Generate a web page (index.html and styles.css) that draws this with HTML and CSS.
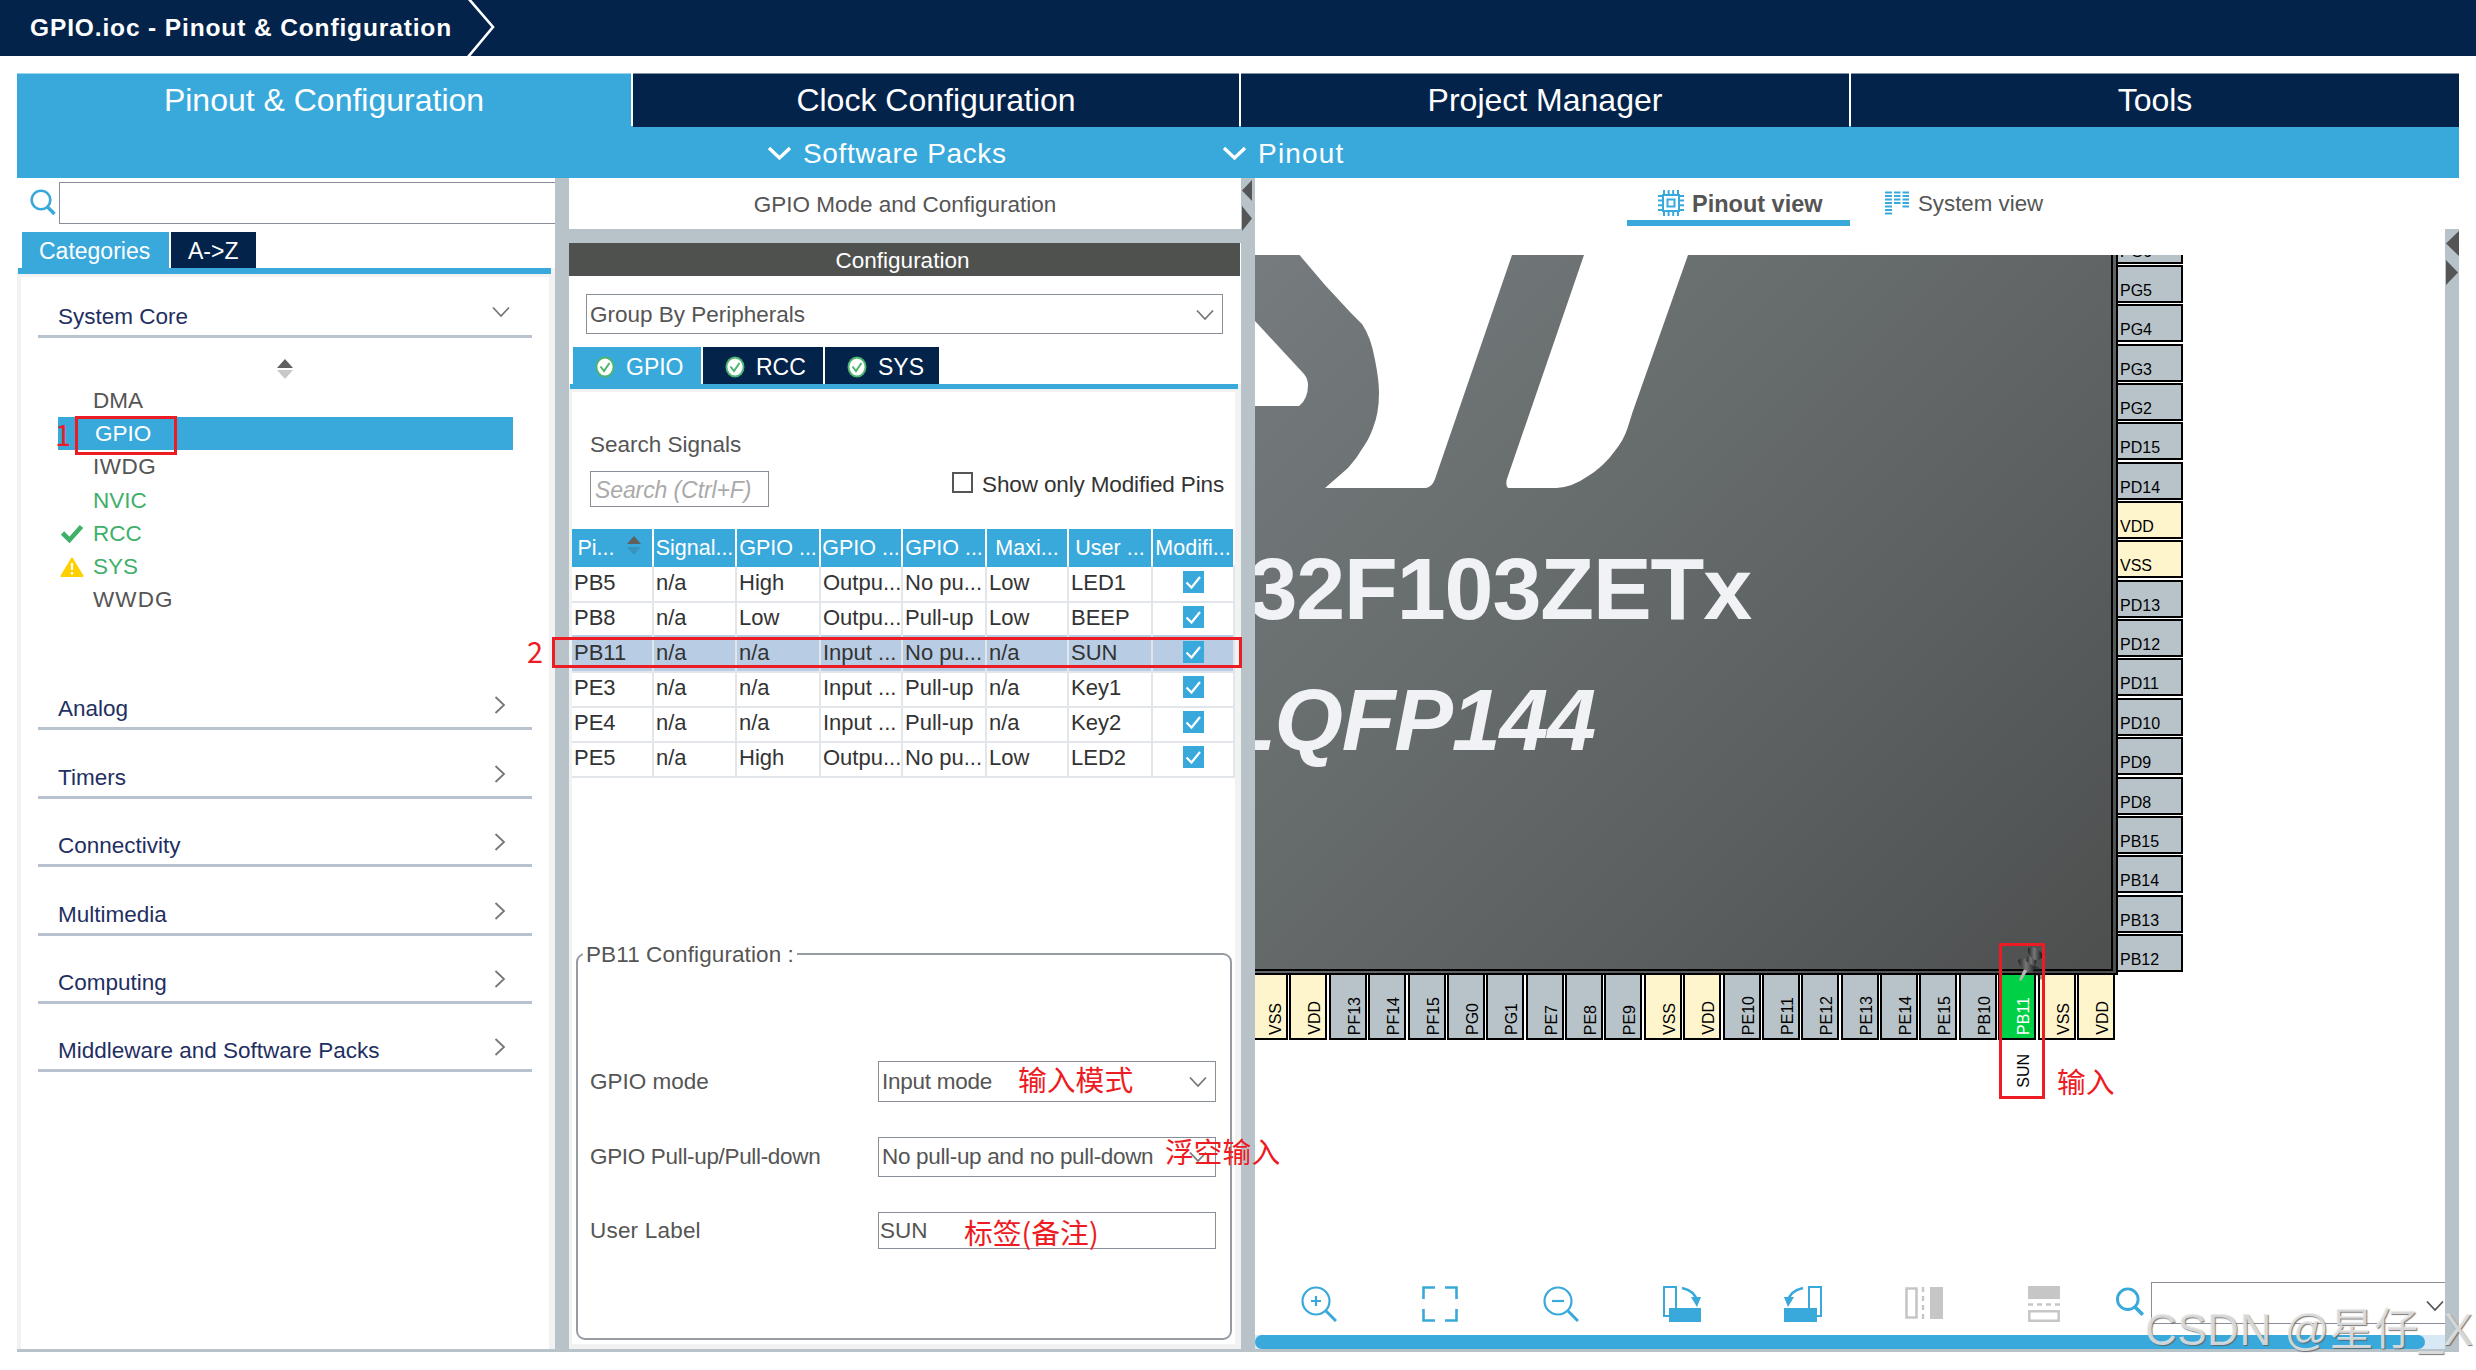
FILE: index.html
```html
<!DOCTYPE html>
<html lang="en">
<head>
<meta charset="utf-8">
<title>GPIO.ioc - Pinout &amp; Configuration</title>
<link rel="stylesheet" href="styles.css">
</head>
<body>
<svg class="defs" width="0" height="0">
  <defs>
    <symbol id="ok" viewBox="0 0 20 22"><ellipse cx="10" cy="11" rx="9.5" ry="10.5" fill="#4cb56f"/><ellipse cx="10" cy="11" rx="7.6" ry="8.6" fill="#fff"/><path d="M5.5 10.5 9 15l5.5-8" fill="none" stroke="#4cb56f" stroke-width="2"/></symbol>
    <symbol id="down" viewBox="0 0 18 12"><path d="M1 1.5 9 10l8-8.500" fill="none" stroke="currentColor" stroke-width="1.8"/></symbol>
    <symbol id="right" viewBox="0 0 12 18"><path d="M1.500 1 10 9l-8.500 8" fill="none" stroke="currentColor" stroke-width="1.800"/></symbol>
    <symbol id="search" viewBox="0 0 26 27"><circle cx="11" cy="11" r="9.300" fill="none" stroke="#39a9dc" stroke-width="2.600"/><path d="m17.500 18 7 7" stroke="#39a9dc" stroke-width="3.400"/></symbol>
    <symbol id="tick" viewBox="0 0 21 22"><path fill="#39a9dc" d="M0 0h21v22H0z"/><path d="m3.500 11.500 5 5L17 6" fill="none" stroke="#fff" stroke-width="2.200"/></symbol>
  </defs>
</svg>

<header class="titlebar">
  <span class="titlebar-text">GPIO.ioc - Pinout &amp; Configuration</span>
  <svg width="30" height="56"><path d="M1 -2 26 27 1 57" fill="none" stroke="#fff" stroke-width="2.600"/></svg>
</header>

<nav class="main-tabs">
  <div class="main-tab active">Pinout &amp; Configuration</div>
  <div class="main-tab">Clock Configuration</div>
  <div class="main-tab">Project Manager</div>
  <div class="main-tab">Tools</div>
</nav>
<div class="sub-bar">
  <div class="sub-item packs"><svg width="25" height="15"><path d="m2 2 10.500 10L23 2" fill="none" stroke="#fff" stroke-width="3.400"/></svg>Software Packs</div>
  <div class="sub-item pinout"><svg width="25" height="15"><path d="m2 2 10.500 10L23 2" fill="none" stroke="#fff" stroke-width="3.400"/></svg>Pinout</div>
</div>

<main class="workspace">
  <aside class="sidebar">
    <div class="side-search"><svg width="26" height="27"><use href="#search"/></svg><div class="side-input"></div></div>
    <div class="tabs side-tabs"><div class="tab active">Categories</div><div class="tab">A-&gt;Z</div></div>
    <div class="side-panel">
      <div class="cat first"><span>System Core</span><svg width="18" height="12"><use href="#down"/></svg></div>
      <div class="periph">
        <svg class="sort" width="16" height="20"><path d="M8 0l8 9H0z" fill="#606060"/><path d="M8 20l8-9H0z" fill="#c8c8c8"/></svg>
        <div class="item"><i></i>DMA</div>
        <div class="item selected"><i></i>GPIO</div>
        <div class="item wide"><i></i>IWDG</div>
        <div class="item green"><i></i>NVIC</div>
        <div class="item green"><i><svg width="24" height="20"><path d="m2.500 9 7 7L21.500 2.500" fill="none" stroke="#3fb06a" stroke-width="4.600"/></svg></i>RCC</div>
        <div class="item green"><i><svg width="24" height="20"><path d="M12 1.500 22.500 19h-21z" fill="#ffd000" stroke="#ffd000" stroke-width="2" stroke-linejoin="round"/><path d="M12 6v7m0 2v2.500" stroke="#fff" stroke-width="2.200"/></svg></i>SYS</div>
        <div class="item wider"><i></i>WWDG</div>
      </div>
      <div class="cat"><span>Analog</span><svg width="12" height="18"><use href="#right"/></svg></div>
      <div class="cat"><span>Timers</span><svg width="12" height="18"><use href="#right"/></svg></div>
      <div class="cat"><span>Connectivity</span><svg width="12" height="18"><use href="#right"/></svg></div>
      <div class="cat"><span>Multimedia</span><svg width="12" height="18"><use href="#right"/></svg></div>
      <div class="cat"><span>Computing</span><svg width="12" height="18"><use href="#right"/></svg></div>
      <div class="cat"><span>Middleware and Software Packs</span><svg width="12" height="18"><use href="#right"/></svg></div>
    </div>
  </aside>
  <div class="splitter"></div>

  <section class="config">
    <div class="mode-title">GPIO Mode and Configuration</div>
    <div class="gap-bar"></div>
    <div class="config-title">Configuration</div>
    <div class="field group-by">Group By Peripherals<svg width="18" height="12"><use href="#down"/></svg></div>
    <div class="tabs config-tabs">
      <div class="tab active"><svg width="20" height="22"><use href="#ok"/></svg>GPIO</div>
      <div class="tab rcc"><svg width="20" height="22"><use href="#ok"/></svg>RCC</div>
      <div class="tab sys"><svg width="20" height="22"><use href="#ok"/></svg>SYS</div>
    </div>
    <div class="config-panel">
      <div class="signals-label">Search Signals</div>
      <div class="signals-row">
        <div class="signals-input">Search (Ctrl+F)</div>
        <div class="modified"><span class="box"></span>Show only Modified Pins</div>
      </div>
      <div class="table">
        <div class="tr head"><span class="l">Pi...<svg width="14" height="19"><path d="M7 0l7 8H0z" fill="#606060"/><path d="M7 19l7-8H0z" fill="#3994bd"/></svg></span><span>Signal...</span><span>GPIO ...</span><span>GPIO ...</span><span>GPIO ...</span><span>Maxi...</span><span>User ...</span><span>Modifi...</span></div>
        <div class="tr"><span>PB5</span><span>n/a</span><span>High</span><span>Outpu...</span><span>No pu...</span><span>Low</span><span>LED1</span><span><svg width="21" height="22"><use href="#tick"/></svg></span></div>
        <div class="tr"><span>PB8</span><span>n/a</span><span>Low</span><span>Outpu...</span><span>Pull-up</span><span>Low</span><span>BEEP</span><span><svg width="21" height="22"><use href="#tick"/></svg></span></div>
        <div class="tr picked"><span>PB11</span><span>n/a</span><span>n/a</span><span>Input ...</span><span>No pu...</span><span>n/a</span><span>SUN</span><span><svg width="21" height="22"><use href="#tick"/></svg></span></div>
        <div class="tr"><span>PE3</span><span>n/a</span><span>n/a</span><span>Input ...</span><span>Pull-up</span><span>n/a</span><span>Key1</span><span><svg width="21" height="22"><use href="#tick"/></svg></span></div>
        <div class="tr"><span>PE4</span><span>n/a</span><span>n/a</span><span>Input ...</span><span>Pull-up</span><span>n/a</span><span>Key2</span><span><svg width="21" height="22"><use href="#tick"/></svg></span></div>
        <div class="tr"><span>PE5</span><span>n/a</span><span>High</span><span>Outpu...</span><span>No pu...</span><span>Low</span><span>LED2</span><span><svg width="21" height="22"><use href="#tick"/></svg></span></div>
      </div>
      <div class="pin-config">
        <div class="legend">PB11 Configuration :</div>
        <div class="form-row"><label>GPIO mode</label><div class="field mode">Input mode<svg width="18" height="12"><use href="#down"/></svg></div></div>
        <div class="form-row tight"><label>GPIO Pull-up/Pull-down</label><div class="field">No pull-up and no pull-down<svg width="18" height="12"><use href="#down"/></svg></div></div>
        <div class="form-row"><label class="user">User Label</label><div class="field label-input">SUN</div></div>
      </div>
    </div>
  </section>
  <div class="splitter second"><svg width="13" height="56"><path d="M10 2v21L0 12.500zM0 28v25l10-12.500z" fill="#555"/></svg></div>

  <section class="view">
    <div class="view-tabs">
      <div class="view-tab active">
        <svg width="26" height="26" fill="none" stroke="#39a9dc" stroke-width="2"><path d="M5 5h16v16H5zM9.500 9.500h7v7h-7zM6 0v5m4.600-5v5m4.600-5v5M20 0v5M6 21v5m4.600-5v5m4.600-5v5m4.800-5v5M0 6h5m-5 4.600h5m-5 4.600h5M0 20h5M21 6h5m-5 4.600h5m-5 4.600h5M21 20h5"/></svg>Pinout view
      </div>
      <div class="view-tab">
        <svg width="26" height="24" stroke="#39a9dc" stroke-width="2.200"><path d="M1 1.500h7m2 0h6.500m2 0H25M1 5h7m2 0h6.500m2 0H25M1 8.500h7m2 0h6.500m2 0H25M1 12h7m2 0h6.500m2 0H25M1 15.500h7m10.500 0H25M1 19h7M1 22.500h7"/></svg>System view
      </div>
    </div>
    <div class="view-body">
      <div class="view-main">
        <div class="canvas">
          <div class="die">
            <svg class="logo" width="440" height="240" viewBox="1255 255 440 240" fill="#fff">
              <path d="M1299.500 255 1325 285l25 27 12 12q9 13 13 36 4 20 4 33 0 20-6 35-4 11-9 18-7 12-16 22l-23 20h101q6-1 9-9L1512 255z"/>
              <path d="M1584 255 1506.600 480q-1 7 2 8h48q16-1 30-11 17-10 29-27 8-10 12-22l5-16L1688 255z"/>
              <path d="M1255 321 1304 374q4 5 4 11 0 14-9 21h-44z"/>
            </svg>
            <div class="part">STM32F103ZETx</div>
            <div class="package">LQFP144</div>
          </div>
          <div class="pins-right">
            <div class="pin">PG6</div><div class="pin">PG5</div><div class="pin">PG4</div><div class="pin">PG3</div><div class="pin">PG2</div><div class="pin">PD15</div><div class="pin">PD14</div><div class="pin power">VDD</div><div class="pin power">VSS</div><div class="pin">PD13</div><div class="pin">PD12</div><div class="pin">PD11</div><div class="pin">PD10</div><div class="pin">PD9</div><div class="pin">PD8</div><div class="pin">PB15</div><div class="pin">PB14</div><div class="pin">PB13</div><div class="pin">PB12</div>
          </div>
          <div class="pins-bottom">
            <div class="pin power"><b>VSS</b></div><div class="pin power"><b>VDD</b></div><div class="pin"><b>PF13</b></div><div class="pin"><b>PF14</b></div><div class="pin"><b>PF15</b></div><div class="pin"><b>PG0</b></div><div class="pin"><b>PG1</b></div><div class="pin"><b>PE7</b></div><div class="pin"><b>PE8</b></div><div class="pin"><b>PE9</b></div><div class="pin power"><b>VSS</b></div><div class="pin power"><b>VDD</b></div><div class="pin"><b>PE10</b></div><div class="pin"><b>PE11</b></div><div class="pin"><b>PE12</b></div><div class="pin"><b>PE13</b></div><div class="pin"><b>PE14</b></div><div class="pin"><b>PE15</b></div><div class="pin"><b>PB10</b></div><div class="pin used"><b>PB11</b></div><div class="pin power"><b>VSS</b></div><div class="pin power"><b>VDD</b></div>
          </div>
          <b class="pin-label">SUN</b>
          <svg class="pushpin" width="32" height="38">
            <defs><linearGradient id="pg"><stop offset="0" stop-color="#222"/><stop offset=".45" stop-color="#777"/><stop offset="1" stop-color="#181818"/></linearGradient></defs>
            <path d="m14 24 10 10 4-6-8-8z" fill="#222" opacity=".45"/>
            <path d="m7 23-5 11 2 1 7-11z" fill="#b5b5b5"/>
            <path d="M1 14q4-3 8-1l10 8q-3 6-9 4Q2 22 1 14z" fill="url(#pg)"/>
            <path d="m11 9 9 3-2 9-9-6z" fill="url(#pg)"/>
            <path d="M11 2q6-3 11 3 4 1 3 6-2 4-7 3-8-4-7-12z" fill="url(#pg)"/>
          </svg>
        </div>
        <div class="toolbar">
          <div class="tool"><svg width="36" height="36" fill="none" stroke="#39a9dc" stroke-width="2.200"><circle cx="15" cy="15" r="13.500"/><path d="M10 15h10M15 10v10"/><path d="m25 25 10 10" stroke-width="3"/></svg></div>
          <div class="tool"><svg width="36" height="36" fill="none" stroke="#39a9dc" stroke-width="2.600"><path d="M1.500 13V1.500H13M23 1.500h11.500V13M34.500 23v11.500H23M13 34.500H1.500V23"/></svg></div>
          <div class="tool"><svg width="36" height="36" fill="none" stroke="#39a9dc" stroke-width="2.200"><circle cx="15" cy="15" r="13.500"/><path d="M9 15h12"/><path d="m25 25 10 10" stroke-width="3"/></svg></div>
          <div class="tool"><svg width="38" height="36"><path d="M1 1h12v29H1z" fill="#fff" stroke="#39a9dc" stroke-width="2"/><path d="M6 22h32v14H6z" fill="#39a9dc"/><path d="M19 2q13 3 15 13" fill="none" stroke="#39a9dc" stroke-width="2.600"/><path d="M28 11h10l-4 10z" fill="#39a9dc"/></svg></div>
          <div class="tool"><svg width="38" height="36"><path d="M25 1h12v29H25z" fill="#fff" stroke="#39a9dc" stroke-width="2"/><path d="M0 22h33v14H0z" fill="#39a9dc"/><path d="M19 2Q6 5 4 15" fill="none" stroke="#39a9dc" stroke-width="2.600"/><path d="M0 11h10L4 21z" fill="#39a9dc"/></svg></div>
          <div class="tool"><svg width="38" height="34"><path d="M1.500 2.500h10v29h-10z" fill="#fff" stroke="#c6c6c6" stroke-width="2.600"/><path d="M18 1v33" stroke="#c6c6c6" stroke-width="2.400" stroke-dasharray="5 4"/><path d="M25 1h13v32H25z" fill="#c6c6c6"/></svg></div>
          <div class="tool last"><svg width="32" height="36"><path d="M0 0h32v13H0z" fill="#c6c6c6"/><path d="M0 18.500h32" stroke="#c6c6c6" stroke-width="2.400" stroke-dasharray="5 4"/><path d="M1.300 25.300h29.400v9.400H1.300z" fill="#fff" stroke="#c6c6c6" stroke-width="2.400"/></svg></div>
          <svg class="tool-search" width="30" height="30" viewBox="0 0 26 27"><use href="#search"/></svg>
          <div class="tool-input"><svg width="18" height="12"><use href="#down"/></svg></div>
        </div>
        <div class="hscroll"><div class="thumb"></div></div>
      </div>
      <div class="right-bar"><svg width="14" height="60"><path d="M14 2v25L1 14.500zM1 31v25l12-12.500z" fill="#555"/></svg></div>
    </div>
  </section>
</main>

<div class="note-box nb-gpio"></div>
<div class="note-box nb-row"></div>
<div class="note-box nb-pin"></div>
<div class="note n-1">1</div>
<div class="note n-2">2</div>
<div class="note n-mode">输入模式</div>
<div class="note n-pull">浮空输入</div>
<div class="note n-label">标签(备注)</div>
<div class="note n-input">输入</div>
<div class="watermark">CSDN @星仔_X</div>
</body>
</html>
```
FILE: styles.css
```css
*, *::before, *::after { box-sizing: border-box; }
body {
  margin: 0;
  width: 2476px;
  height: 1370px;
  overflow: hidden;
  position: relative;
  background: #fff;
  font: 22.5px/26px "Liberation Sans", "Noto Sans CJK SC", sans-serif;
  color: #555;
  white-space: nowrap;
}
svg { display: block; flex: none; }
.defs { position: absolute; }

/* title and top navigation */
.titlebar {
  height: 56px;
  padding-left: 30px;
  display: flex;
  background: #03234b;
  color: #fff;
}
.titlebar-text {
  width: 437px;
  font-size: 24.5px;
  font-weight: bold;
  line-height: 56px;
  letter-spacing: .87px;
}
.main-tabs {
  margin: 17px 17px 0;
  height: 53px;
  display: grid;
  grid-template-columns: 614px 606px 608px 608px;
  column-gap: 2px;
}
.main-tab {
  background: #03234b;
  border-top: 1px solid #8491a5;
  color: #fff;
  font-size: 32px;
  line-height: 53px;
  text-align: center;
}
.main-tab.active { background: #39a9dc; border-color: #9cd4ed; }
.sub-bar {
  margin: 0 17px;
  height: 52px;
  padding-left: 750px;
  display: flex;
  background: #39a9dc;
  color: #fff;
  font-size: 28px;
  letter-spacing: .65px;
}
.sub-item { display: flex; align-items: center; gap: 11px; padding-top: 3px; }
.packs { width: 455px; }
.pinout { letter-spacing: 1.2px; }

/* three columns */
.workspace {
  margin-left: 17px;
  width: 2442px;
  height: 1174px;
  display: flex;
  border-bottom: 3px solid #b8c3c9;
}
.splitter { width: 14px; background: #b8c3c9; }
.splitter.second { padding-left: 1px; }

.tabs { display: flex; gap: 2px; color: #fff; }
.tab { display: flex; align-items: center; background: #03234b; }
.tab.active { background: #39a9dc; }

/* categories */
.sidebar { width: 538px; display: flex; flex-direction: column; }
.side-search { height: 54px; display: flex; padding: 4px 0 0 12px; }
.side-search svg { margin: 7px 3px 0 1px; }
.side-input { flex: 1; height: 42px; border: 1px solid #888f98; border-right: 0; }
.side-tabs { padding-left: 5px; height: 36px; }
.side-tabs .tab { width: 147px; padding: 2px 0 0 17px; font-size: 23px; }
.side-tabs .tab + .tab { width: 85px; }
.side-panel {
  flex: 1;
  border: 3px solid #f2f2f3;
  border-width: 0 6px 0 4px;
}
.side-panel::before {
  content: "";
  display: block;
  height: 9px;
  margin: 0 -2px 0 -3px;
  border-top: 6px solid #39a9dc;
  border-bottom: 3px solid #f2f2f3;
}
.cat {
  margin: 0 17px;
  height: 68.4px;
  padding: 0 26px 5px 20px;
  display: flex;
  align-items: flex-end;
  justify-content: space-between;
  border-bottom: 3px solid #b8c3cf;
  color: #1f2f62;
}
.cat svg { margin: 0 0 8px; color: #777; }
.cat.first { height: 61px; padding: 0 22px 5px 20px; }
.cat.first svg { margin-bottom: 12px; }
.periph { height: 324px; padding: 21px 36px 0 37px; }
.sort { margin: 0 auto 5px; position: relative; left: -1px; }
.item { height: 33.2px; padding-top: 1px; display: flex; align-items: center; }
.item i { width: 35px; padding-left: 2px; }
.item.green { color: #3fb06a; }
.item.selected { background: #39a9dc; color: #fff; }
.item.selected i { width: 37px; }
.item.wide { letter-spacing: .5px; }
.item.wider { letter-spacing: 1.1px; }

/* configuration column */
.config { width: 672px; display: flex; flex-direction: column; }
.config > * { flex: none; }
.mode-title { height: 51px; line-height: 53px; text-align: center; }
.gap-bar { height: 14px; background: #b8c3c9; }
.config-title { height: 33px; line-height: 35px; background: #4f514f; color: #fff; text-align: center; margin-right: 1px; padding-right: 4px; }
.field {
  height: 40px;
  border: 1px solid #888f98;
  padding: 0 8px 0 3px;
  display: flex;
  align-items: center;
  justify-content: space-between;
}
.field svg { color: #777; }
.group-by { margin: 18px 18px 13px 17px; padding-top: 2px; }
.config-tabs { height: 37px; padding-left: 4px; }
.config-tabs .tab { width: 128px; padding: 2px 0 0 22px; gap: 11px; font-size: 23px; }
.config-tabs .rcc { width: 120px; }
.config-tabs .sys { width: 114px; }
.config > .config-panel {
  flex: 1;
  border: solid #f2f2f3;
  border-width: 0 6px 5px 3px;
}
.config-panel::before {
  content: "";
  display: block;
  height: 8px;
  margin: 0 -3px 0 -2px;
  border-top: 5px solid #39a9dc;
  border-bottom: 3px solid #f2f2f3;
}
.signals-label { margin: 40px 0 13px 18px; }
.signals-row { display: flex; justify-content: space-between; padding: 0 11px 0 18px; height: 36px; }
.signals-input {
  width: 179px;
  height: 36px;
  border: 1px solid #888f98;
  padding-left: 4px;
  line-height: 36px;
  font-style: italic;
  font-size: 23px;
  letter-spacing: -.1px;
  color: #aaa;
}
.modified { display: flex; color: #333; gap: 9px; padding-top: 1px; letter-spacing: -.14px; }
.box { width: 21px; height: 21px; border: 2px solid #555; }
.table { margin-top: 22px; color: #333; }
.tr {
  display: grid;
  grid-template-columns: 82px 83px 84px 82px 84px 82px 84px 82px;
  height: 35px;
  font-size: 22px;
  line-height: 36px;
}
.tr span {
  padding-left: 2px;
  border-right: 2px solid #e2e5ea;
  border-bottom: 2px solid #e2e5ea;
}
.tr svg { margin: 6px auto 0; position: relative; left: -1px; }
.tr.picked span { background: #b8cde4; }
.tr.head { margin-bottom: 1px; color: #fff; }
.tr.head span {
  padding: 0;
  background: #39a9dc;
  border-color: #fff;
  border-bottom: 0;
  line-height: 38px;
  display: flex;
  justify-content: center;
  font-size: 21.5px;
}
.head .l svg { margin: 7px 0 0 13px; }
.tr.head .l { padding-right: 5px; }
.pin-config {
  position: relative;
  margin: 178px 3px 0 4px;
  height: 387px;
  padding: 106px 14px 0 12px;
  border: 2px solid #969ca2;
  border-radius: 9px;
}
.legend { position: absolute; left: 5px; top: -13px; padding: 0 3px; background: #fff; letter-spacing: .1px; }
.form-row { display: flex; align-items: center; margin-bottom: 35px; }
.form-row label { width: 288px; }
.form-row label.user { letter-spacing: .2px; }
.form-row .field { flex: 1; }
.form-row .mode { height: 41px; letter-spacing: -.25px; }
.form-row .label-input { height: 37px; padding-left: 1px; }
.form-row.tight { letter-spacing: -.33px; }

/* pinout view */
.view { flex: 1; display: flex; flex-direction: column; }
.view-tabs { height: 51px; display: flex; padding: 0 0 3px 372px; }
.view-tab { display: flex; align-items: center; gap: 8px; padding: 10px 0 6px 34px; font-size: 22.300px; }
.view-tab svg { margin-bottom: 2px; }
.view-tab.active { width: 223px; padding: 10px 0 0 31px; font-size: 23.500px; font-weight: bold; border-bottom: 6px solid #39a9dc; }
.view-body { flex: 1; display: flex; }
.view-main { width: 1190px; display: flex; flex-direction: column; }
.right-bar { width: 14px; background: #b8c3c9; }

.canvas { position: relative; height: 1041px; margin-top: 26px; overflow: hidden; }
.die {
  position: absolute;
  left: -10px;
  top: -10px;
  width: 873px;
  height: 730px;
  border: solid #000;
  border-width: 0 2px 2px 0;
  background: linear-gradient(135deg, #767c7f, #666b6b 40%, #5c6060 65%, #4d4f4f);
  color: #f0f2f5;
  font-size: 88px;
  font-weight: bold;
  line-height: 100px;
}
.die::after {
  content: "";
  position: absolute;
  inset: 0 3px 2px 0;
  border: solid #000;
  border-width: 0 2px 2px 0;
}
.logo { position: absolute; left: 10px; top: 10px; }
.part { position: absolute; right: 365px; top: 294px; letter-spacing: -1.1px; }
.package { position: absolute; right: 521px; top: 425px; font-style: italic; letter-spacing: -1.2px; }
.pin {
  background: #b8c3c9;
  border: 2px solid #000;
  color: #000;
  font-size: 16px;
}
.pin b, .pin-label { font-weight: normal; writing-mode: vertical-rl; transform: rotate(180deg); }
.pin.power { background: #fff5cc; }
.pin.used { background: #00d046; color: #fff; }
.pins-right {
  position: absolute;
  left: 863px;
  top: -29.300px;
  height: 746.400px;
  width: 65px;
  display: flex;
  flex-direction: column;
  justify-content: space-between;
}
.pins-right .pin { height: 38px; padding: 14px 0 0 2px; line-height: 20px; border-left: 0; }
.pins-bottom {
  position: absolute;
  left: -5px;
  top: 720px;
  width: 865px;
  display: flex;
  justify-content: space-between;
}
.pins-bottom .pin {
  width: 38px;
  height: 65px;
  border-top: 0;
  padding: 0 0 3px 0;
  display: flex;
  justify-content: flex-end;
  align-items: flex-end;
}
.pins-bottom b { line-height: 20px; }
.pin-label { position: absolute; left: 759px; top: 799px; font-size: 16px; line-height: 20px; color: #000; }
.pushpin { position: absolute; left: 762px; top: 691px; }

.toolbar { height: 39px; margin-top: -15px; display: flex; padding-left: 3px; position: relative; }
.tool { width: 121px; padding-top: 5px; display: flex; justify-content: center; }
.tool.last { width: 119px; }
.tool-search { margin: 6px 6px 0 12px; }
.tool-input { flex: 1; height: 42px; margin-top: 1px; border: 1px solid #888f98; border-right: 0; padding: 17px 1px 0 0; color: #555; }
.tool-input svg { margin-left: auto; }
.hscroll { margin-top: auto; height: 14px; background: #d9e8f5; }
.thumb { width: 1170px; height: 14px; border-radius: 7px; background: #39a9dc; }

/* annotations drawn over the window */
.note-box { position: absolute; border: 3px solid #ed1c24; }
.nb-gpio { left: 75px; top: 416px; width: 102px; height: 39px; }
.nb-row { left: 552px; top: 637px; width: 690px; height: 31px; }
.nb-pin { left: 1999px; top: 943px; width: 46px; height: 156px; }
.note { position: absolute; font: 28.800px/32px "Noto Sans CJK SC", sans-serif; color: #ed1c24; }
.n-1 { left: 55px; top: 418px; }
.n-2 { left: 527px; top: 635px; }
.n-mode { left: 1018px; top: 1063px; }
.n-pull { left: 1165px; top: 1135px; }
.n-label { left: 964px; top: 1216px; }
.n-input { left: 2057px; top: 1065px; }
.watermark {
  position: absolute;
  left: 2145px;
  top: 1302px;
  font-size: 44px;
  line-height: 56px;
  letter-spacing: .5px;
  color: rgba(232, 232, 232, .85);
  text-shadow: 1px 1px 1px rgba(90, 90, 90, .8);
}
```
